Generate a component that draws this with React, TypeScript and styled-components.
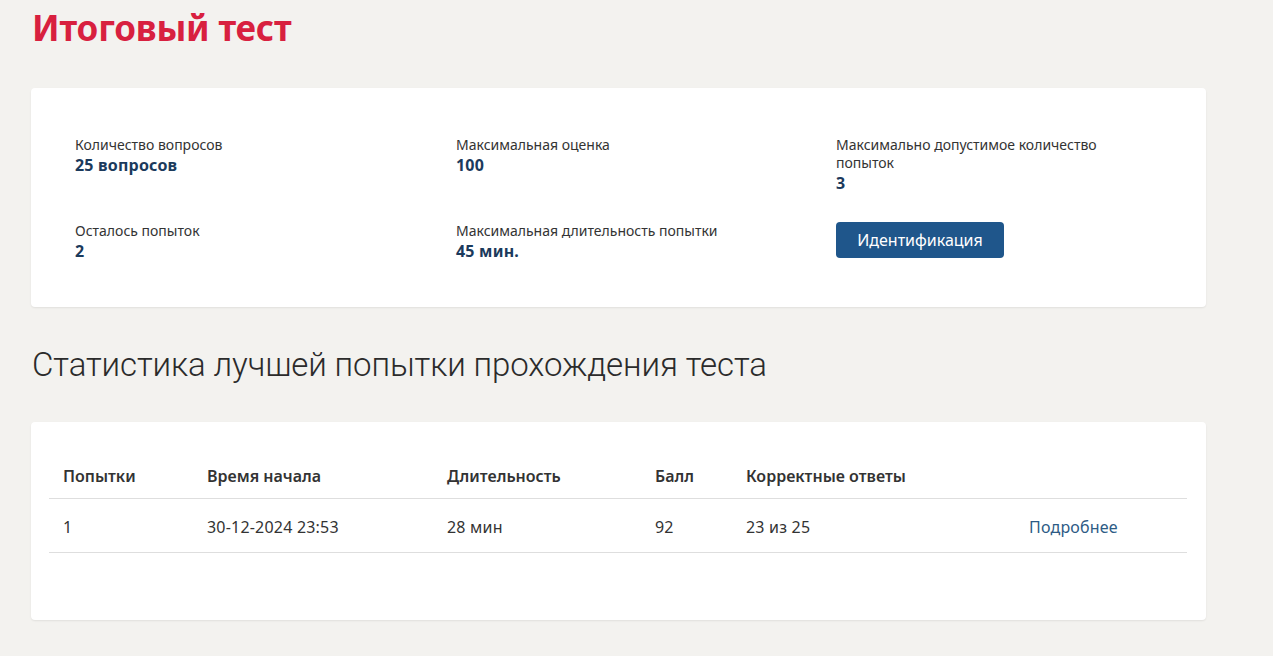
import React from "react";
import styled, { createGlobalStyle } from "styled-components";

const Global = createGlobalStyle`
  html, body { margin: 0; padding: 0; background: #f3f2ef; }
  body { font-family: "Noto Sans", "Open Sans", sans-serif; color: #333; }
  * { box-sizing: border-box; }
`;

const Page = styled.div`
  width: 1273px;
  padding: 0 67px 40px 31px;
`;

const Title = styled.h1`
  margin: 0;
  padding: 8px 0 0 1px;
  height: 88px;
  font-family: "Noto Sans", sans-serif;
  font-weight: 700;
  font-size: 35px;
  line-height: 40px;
  color: #d8203f;
  letter-spacing: -0.2px;
`;

const Card = styled.section<{ $pt: number; $pb: number; $pl: number; $pr: number }>`
  background: #fff;
  border-radius: 4px;
  box-shadow: 0 1px 2px rgba(0, 0, 0, 0.08);
  padding: ${(p) => p.$pt}px ${(p) => p.$pr}px ${(p) => p.$pb}px ${(p) => p.$pl}px;
`;

const InfoGrid = styled.div`
  display: grid;
  grid-template-columns: 381px 380px 300px;
  row-gap: 28px;
`;

const Item = styled.div``;

const Label = styled.div`
  font-size: 14px;
  line-height: 18px;
  color: #333;
  max-width: 290px;
`;

const Value = styled.div`
  font-size: 16px;
  line-height: 22px;
  font-weight: 700;
  color: #1b3a5c;
  letter-spacing: 0.2px;
`;

const Button = styled.button`
  font-family: "Noto Sans", sans-serif;
  font-size: 16px;
  color: #fff;
  background: #1f568b;
  border: none;
  border-radius: 4px;
  height: 36px;
  width: 168px;
  cursor: pointer;
`;

const Heading = styled.h2`
  margin: 0;
  padding: 0 0 0 1px;
  height: 115px;
  display: flex;
  align-items: center;
  font-family: "Roboto", sans-serif;
  font-weight: 300;
  font-size: 33px;
  letter-spacing: -0.1px;
  color: #2b2b2b;
`;

const Table = styled.table`
  width: 100%;
  border-collapse: collapse;
  table-layout: fixed;
`;

const Th = styled.th<{ $w?: number }>`
  width: ${(p) => (p.$w ? `${p.$w}px` : "auto")};
  text-align: left;
  font-weight: 600;
  font-size: 16px;
  color: #333;
  height: 43px;
  padding: 0 14px;
  border-bottom: 1px solid #dedede;
`;

const Td = styled.td`
  font-size: 16px;
  color: #333;
  height: 54px;
  padding: 3px 14px 0;
  border-bottom: 1px solid #dedede;
  letter-spacing: 0.2px;
`;

const Link = styled.a`
  color: #2d5b85;
  text-decoration: none;
`;

const columns = [
  { t: "Попытки", w: 144 },
  { t: "Время начала", w: 240 },
  { t: "Длительность", w: 208 },
  { t: "Балл", w: 91 },
  { t: "Корректные ответы", w: 283 },
  { t: "", w: 0 },
];

export default function App() {
  return (
    <Page>
      <Global />
      <Title>Итоговый тест</Title>
      <Card $pt={48} $pb={45} $pl={44} $pr={44}>
        <InfoGrid>
          <Item>
            <Label>Количество вопросов</Label>
            <Value>25 вопросов</Value>
          </Item>
          <Item>
            <Label>Максимальная оценка</Label>
            <Value>100</Value>
          </Item>
          <Item>
            <Label>Максимально допустимое количество попыток</Label>
            <Value>3</Value>
          </Item>
          <Item>
            <Label>Осталось попыток</Label>
            <Value>2</Value>
          </Item>
          <Item>
            <Label>Максимальная длительность попытки</Label>
            <Value>45 мин.</Value>
          </Item>
          <Item>
            <Button>Идентификация</Button>
          </Item>
        </InfoGrid>
      </Card>
      <Heading>Статистика лучшей попытки прохождения теста</Heading>
      <Card $pt={33} $pb={67} $pl={18} $pr={19}>
        <Table>
          <thead>
            <tr>
              {columns.map((c, i) => (
                <Th key={i} $w={c.w || undefined}>
                  {c.t}
                </Th>
              ))}
            </tr>
          </thead>
          <tbody>
            <tr>
              <Td>1</Td>
              <Td>30-12-2024 23:53</Td>
              <Td>28 мин</Td>
              <Td>92</Td>
              <Td>23 из 25</Td>
              <Td>
                <Link href="#">Подробнее</Link>
              </Td>
            </tr>
          </tbody>
        </Table>
      </Card>
    </Page>
  );
}
